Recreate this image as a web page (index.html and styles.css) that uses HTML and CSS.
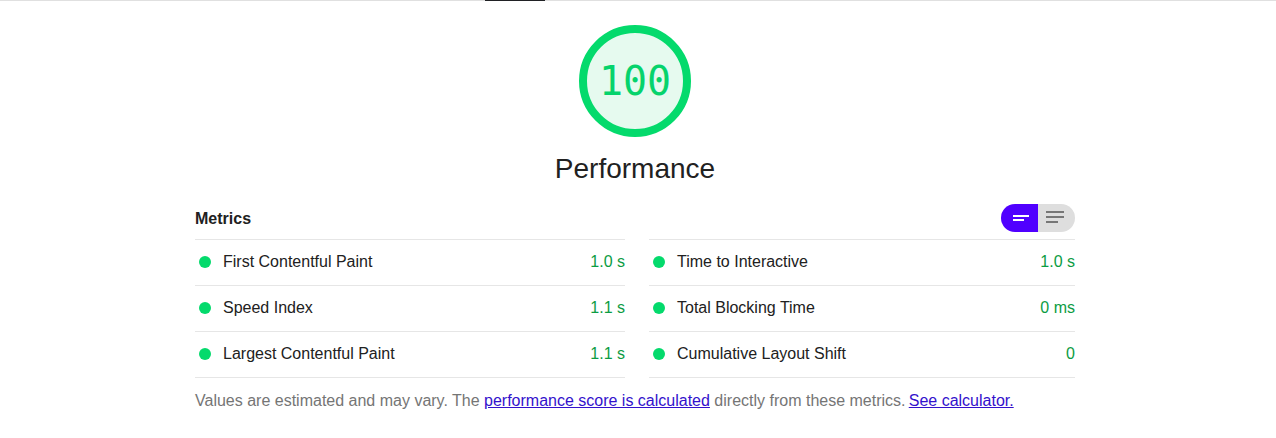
FILE: index.html
```html
<!DOCTYPE html>
<html lang="en">
<head>
<meta charset="utf-8">
<title>Performance</title>
<link rel="stylesheet" href="styles.css">
</head>
<body>
<div class="topbar"><div class="tab-indicator"></div></div>
<main class="report">
  <section class="gauge-wrap">
    <div class="gauge">
      <svg class="gauge-svg" width="112" height="112" viewBox="0 0 112 112" aria-hidden="true">
        <circle cx="56" cy="56" r="52" fill="#e6faef" stroke="#04da6c" stroke-width="8"/>
      </svg>
      <span class="gauge-value">100</span>
    </div>
    <h1 class="gauge-title">Performance</h1>
  </section>

  <section class="metrics">
    <div class="metrics-header">
      <h2 class="metrics-title">Metrics</h2>
      <div class="toggle">
        <button class="toggle-btn toggle-on" aria-label="Compact view">
          <svg width="37" height="28" viewBox="0 0 37 28"><rect x="12" y="11" width="16" height="2" fill="#fff"/><rect x="12" y="15" width="11" height="2" fill="#fff"/></svg>
        </button>
        <button class="toggle-btn toggle-off" aria-label="Expanded view">
          <svg width="37" height="28" viewBox="0 0 37 28"><rect x="8" y="7" width="18" height="2" fill="#777"/><rect x="8" y="12" width="18" height="2" fill="#777"/><rect x="8" y="17" width="12" height="2" fill="#777"/></svg>
        </button>
      </div>
    </div>
    <div class="metrics-grid">
      <div class="metric"><span class="dot"></span><span class="metric-name">First Contentful Paint</span><span class="metric-value">1.0 s</span></div>
      <div class="metric"><span class="dot"></span><span class="metric-name">Time to Interactive</span><span class="metric-value">1.0 s</span></div>
      <div class="metric"><span class="dot"></span><span class="metric-name">Speed Index</span><span class="metric-value">1.1 s</span></div>
      <div class="metric"><span class="dot"></span><span class="metric-name">Total Blocking Time</span><span class="metric-value">0 ms</span></div>
      <div class="metric"><span class="dot"></span><span class="metric-name">Largest Contentful Paint</span><span class="metric-value">1.1 s</span></div>
      <div class="metric"><span class="dot"></span><span class="metric-name">Cumulative Layout Shift</span><span class="metric-value">0</span></div>
    </div>
    <p class="note">Values are estimated and may vary. The <a href="#">performance score is calculated</a> directly from these metrics.&thinsp;<a href="#">See calculator.</a></p>
  </section>
</main>
</body>
</html>
```

FILE: styles.css
```css
* { box-sizing: border-box; }
html, body { margin: 0; padding: 0; background: #fff; }
body {
  font-family: "Liberation Sans", Arial, sans-serif;
  color: #212121;
  font-size: 16px;
}
.topbar {
  height: 1px;
  background: #e0e0e0;
}
.tab-indicator {
  margin-left: 485px;
  width: 60px;
  height: 1px;
  background: #202124;
}
.report {
  width: 880px;
  margin-left: 195px;
}
.gauge-wrap {
  display: flex;
  flex-direction: column;
  align-items: center;
  padding-top: 24px;
}
.gauge {
  display: grid;
  width: 112px;
  height: 112px;
  place-items: center;
}
.gauge-svg, .gauge-value { grid-area: 1 / 1; }
.gauge-value {
  font-family: "DejaVu Sans Mono", monospace;
  font-size: 40px;
  line-height: 1;
  color: #06d36c;
}
.gauge-title {
  margin: 14px 0 0;
  font-size: 28px;
  line-height: 36px;
  font-weight: normal;
  color: #212121;
}
.metrics { margin-top: 17px; }
.metrics-header {
  display: flex;
  align-items: center;
  justify-content: space-between;
  height: 28px;
  margin-bottom: 7px;
}
.metrics-title {
  margin: 0;
  font-size: 16px;
  font-weight: bold;
  color: #212121;
  padding-top: 2px;
}
.toggle {
  display: flex;
  width: 74px;
  height: 28px;
  border-radius: 14px;
  overflow: hidden;
}
.toggle-btn {
  width: 37px;
  height: 28px;
  border: 0;
  padding: 0;
  margin: 0;
  display: block;
}
.toggle-btn svg { display: block; }
.toggle-on { background: #5000ff; }
.toggle-off { background: #dedede; }
.metrics-grid {
  display: grid;
  grid-template-columns: 430px 426px;
  column-gap: 24px;
}
.metric {
  display: flex;
  align-items: center;
  height: 46px;
  border-top: 1px solid #e6e6e6;
  padding-left: 4px;
  padding-bottom: 1px;
}
.metric:nth-last-child(-n+2) { border-bottom: 1px solid #e6e6e6; height: 47px; }
.dot {
  width: 12px;
  height: 12px;
  border-radius: 50%;
  background: #04da6c;
  margin-right: 12px;
  flex: none;
}
.metric-name { flex: 1; color: #212121; }
.metric-value { color: #0c9c43; }
.note {
  margin: 11px 0 0;
  line-height: 24px;
  color: #757575;
}
.note a { color: #3311cc; }
```
